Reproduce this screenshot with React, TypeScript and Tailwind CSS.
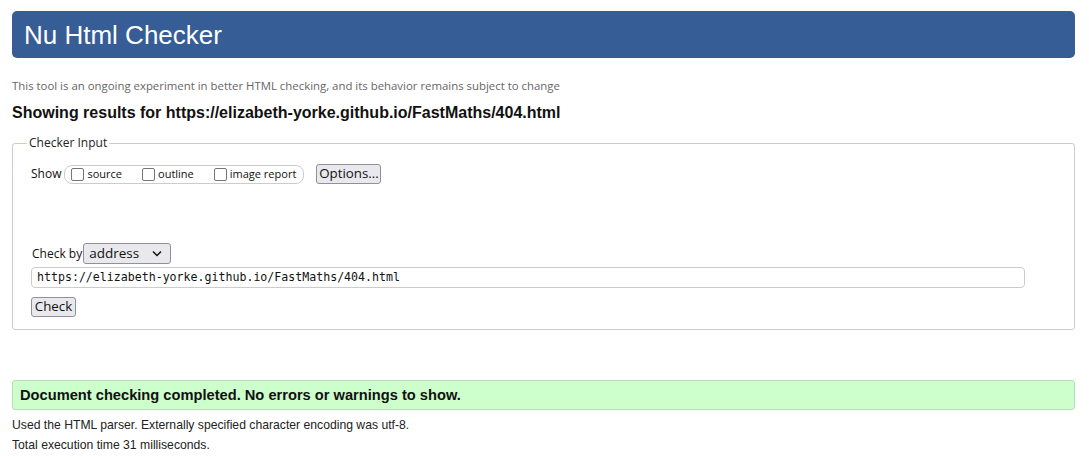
import React from "react";

const ui = { fontFamily: '"Open Sans", "Noto Sans", sans-serif' };
const arial = { fontFamily: '"Liberation Sans", Arial, sans-serif' };
const mono = { fontFamily: '"DejaVu Sans Mono", "Liberation Mono", monospace' };

const Box = ({ label }: { label: string }) => (
  <span className="flex items-center gap-[3px]">
    <span className="inline-block w-[13px] h-[13px] border border-[#767676] rounded-[2px] bg-white" />
    <span className="text-[11px] text-[#111]">{label}</span>
  </span>
);

const App = () => {
  return (
    <div className="min-h-screen bg-white pl-3 pr-[14px] text-[#111]" style={arial}>
      <div className="mt-[11px] h-[47px] rounded-[5px] bg-[#365d95] flex items-center pl-3">
        <h1 className="text-[26px] text-white leading-none">Nu Html Checker</h1>
      </div>

      <p className="mt-[20px] text-[11.4px] leading-4 text-[#666]" style={ui}>
        This tool is an ongoing experiment in better HTML checking, and its behavior remains subject to change
      </p>

      <h2 className="mt-[9px] text-[16px] leading-5 font-bold">
        Showing results for https://elizabeth-yorke.github.io/FastMaths/404.html
      </h2>

      <fieldset className="mt-[12px] border border-[#cccccc] rounded-[3px] pl-[18px] pr-4 pb-[12px]" style={ui}>
        <legend className="ml-[-4px] px-[2px] text-[12px] leading-4 text-[#222]">Checker Input</legend>

        <div className="mt-[13px] flex items-center h-[20px]">
          <span className="text-[12px] mr-[3px]">Show</span>
          <div className="h-[19px] w-[240px] border border-[#cccccc] rounded-[8px] flex items-center pl-[6px] gap-[20px]">
            <Box label="source" />
            <Box label="outline" />
            <Box label="image report" />
          </div>
          <button className="ml-[12px] h-[20px] w-[65px] bg-[#e9e9ed] border border-[#8f8f9d] rounded-[3px] text-[13.3px] leading-none">
            Options...
          </button>
        </div>

        <div className="mt-[59px] flex items-center h-[21px]">
          <span className="text-[12px] mr-[1px] ml-[1px]">Check by</span>
          <div className="h-[21px] w-[88px] bg-[#e9e9ed] border border-[#8f8f9d] rounded-[3px] flex items-center justify-between pl-[5px] pr-[8px]">
            <span className="text-[13.5px] leading-none">address</span>
            <svg width="10" height="7" viewBox="0 0 10 7">
              <polyline points="1,1.5 5,5.5 9,1.5" fill="none" stroke="#111" strokeWidth="1.5" />
            </svg>
          </div>
        </div>

        <div className="mt-[3px] h-[21px] w-[994px] border border-[#cccccc] rounded-[4px] flex items-center pl-[5px]">
          <span className="text-[11.6px] leading-none" style={mono}>
            https://elizabeth-yorke.github.io/FastMaths/404.html
          </span>
        </div>

        <button className="block mt-[9px] h-[20px] w-[45px] bg-[#e9e9ed] border border-[#8f8f9d] rounded-[3px] text-[13.3px] leading-none">
          Check
        </button>
      </fieldset>

      <div className="mt-[50px] h-[30px] bg-[#ccffcc] border border-[#bcdcbc] rounded-[3px] flex items-center pl-[7px]">
        <p className="text-[14.67px] font-bold">Document checking completed. No errors or warnings to show.</p>
      </div>

      <p className="mt-[5px] text-[12.2px] leading-5 text-[#222]">
        Used the HTML parser. Externally specified character encoding was utf-8.
      </p>
      <p className="text-[12.2px] leading-5 text-[#222]">Total execution time 31 milliseconds.</p>
    </div>
  );
};

export default App;
